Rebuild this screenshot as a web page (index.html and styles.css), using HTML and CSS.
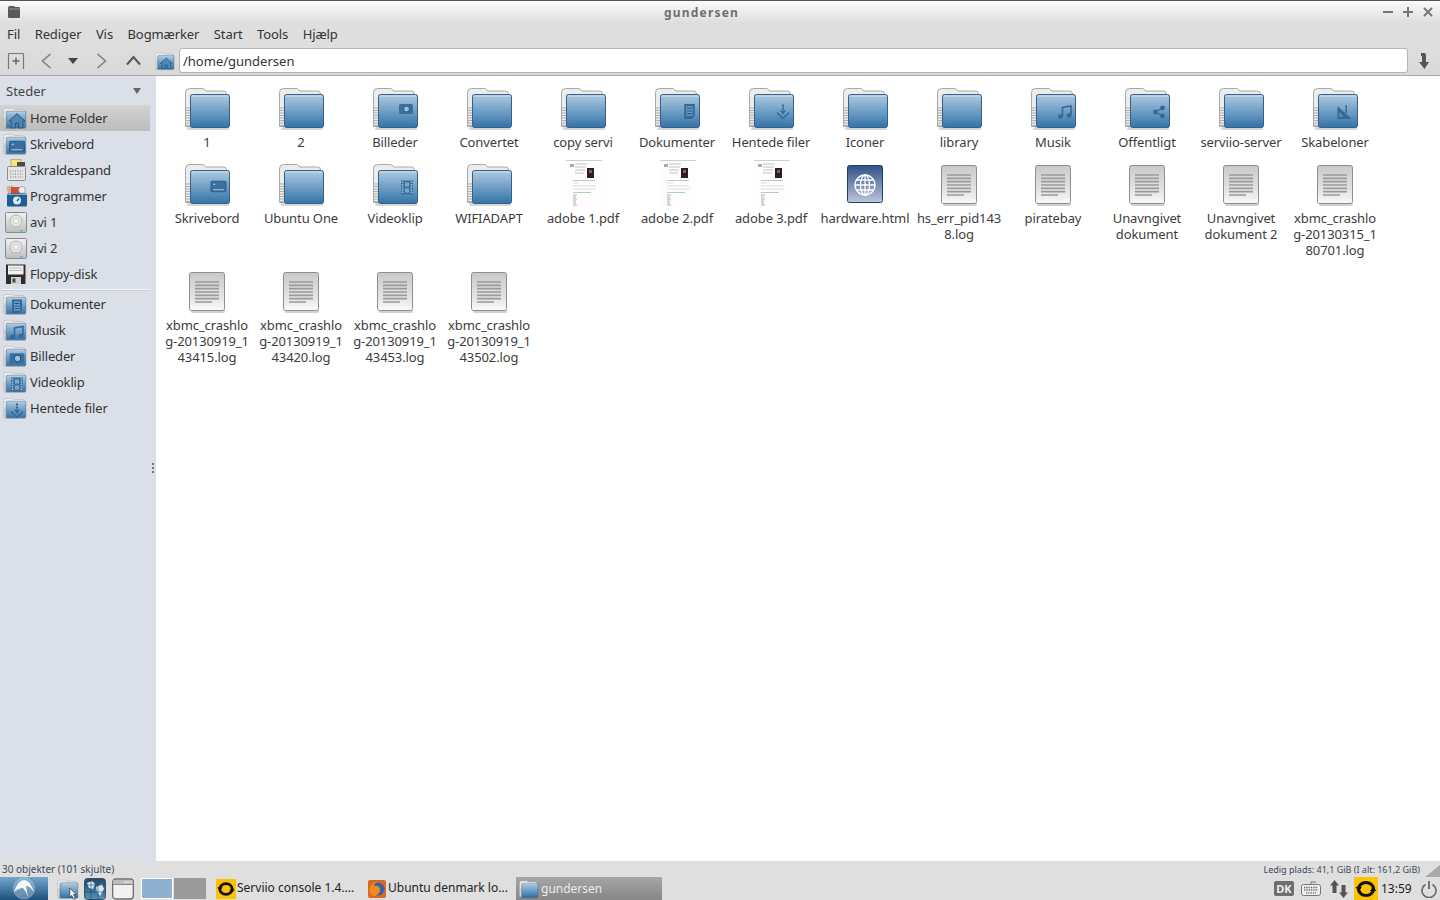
FILE: index.html
```html
<!DOCTYPE html>
<html lang="da">
<head>
  <meta charset="UTF-8" />
  <title>gundersen</title>
  <link rel="stylesheet" href="styles.css">
</head>
<body>

  <!-- ikoner -->
  <svg class="defs" width="0" height="0">
    <defs>
      <linearGradient id="gFolder" x1="0" y1="0" x2="0" y2="1">
        <stop offset="0" stop-color="#aecbe1"/>
        <stop offset="1" stop-color="#3273a9"/>
      </linearGradient>
      <linearGradient id="gDoc" x1="0" y1="0" x2="0" y2="1">
        <stop offset="0" stop-color="#c9c9c9"/>
        <stop offset="0.7" stop-color="#e6e6e6"/>
        <stop offset="1" stop-color="#fafafa"/>
      </linearGradient>
      <linearGradient id="gHtml" x1="0" y1="0" x2="0" y2="1">
        <stop offset="0" stop-color="#2f5089"/>
        <stop offset="1" stop-color="#bcc8dc"/>
      </linearGradient>
      <linearGradient id="gDrive" x1="0" y1="0" x2="0" y2="1">
        <stop offset="0" stop-color="#f2f2f2"/>
        <stop offset="1" stop-color="#bdbdbd"/>
      </linearGradient>
      <linearGradient id="gTile" x1="0" y1="0" x2="0" y2="1">
        <stop offset="0" stop-color="#1f4a6c"/>
        <stop offset="1" stop-color="#4f93bd"/>
      </linearGradient>

      <symbol id="folder" viewBox="0 0 48 48">
        <rect x="3" y="43" width="42" height="3" rx="1.5" fill="#000" opacity=".16"/>
        <path d="M1.5 42.5V8.5q0-4 4-4h13q2 0 3 2.500h18q3 0 3 3v3H8v29.500z" fill="#ececec" stroke="#a9a9a9"/>
        <path d="M2 24h4.500M2 26.500h4.500M2 29h4.500M2 31.500h4.500M2 34h4.500M2 36.500h4.500M2 39h4.500M2 41.500h4.500" stroke="#adadad"/>
        <rect x="6.500" y="10.500" width="39" height="33" rx="2" fill="url(#gFolder)" stroke="#385f87"/>
        <path d="M8 12h36" stroke="#d3e3ef" opacity=".8"/>
      </symbol>

      <symbol id="em-desktop" viewBox="0 0 16 16">
        <rect x="1" y="3" width="14" height="10" rx="1" fill="#3a709d" stroke="#2c5f8b"/>
        <path d="M3 6h2M3 11h10" stroke="#a7c6de"/>
      </symbol>
      <symbol id="em-docs" viewBox="0 0 16 16">
        <path d="M3 1h10v11l-3 3H3z" fill="#34699a"/>
        <path d="M5 3h6v9H5z" fill="#6f9fc5"/>
        <path d="M5.500 5h5M5.500 7.500h5M5.500 10h5" stroke="#24557f"/>
      </symbol>
      <symbol id="em-pictures" viewBox="0 0 16 16">
        <rect x="1" y="3" width="14" height="10" rx="1.500" fill="#3a709d"/>
        <circle cx="8.500" cy="8" r="3" fill="#9cc0db" stroke="#24557f"/>
      </symbol>
      <symbol id="em-video" viewBox="0 0 16 16">
        <rect x="2" y="1" width="12" height="14" fill="#3a709d"/>
        <path d="M3.500 2v12M12.500 2v12" stroke="#a7c6de" stroke-width="1.500" stroke-dasharray="1.500 1"/>
        <path d="M6 3h4v4H6zM6 9h4v4H6z" fill="#7ca8ca"/>
      </symbol>
      <symbol id="em-music" viewBox="0 0 16 16">
        <path d="M5.500 12V3.500L14 2v9" fill="none" stroke="#34699a" stroke-width="1.600"/>
        <ellipse cx="3.500" cy="12.500" rx="2.500" ry="2.200" fill="#34699a"/>
        <ellipse cx="12" cy="11.500" rx="2.500" ry="2.200" fill="#34699a"/>
      </symbol>
      <symbol id="em-download" viewBox="0 0 16 16">
        <path d="M7 1h2v2H7zM7 4h2v2H7zM5 7h6l-3 4z" fill="#34699a"/>
        <path d="M2 9l6 6 6-6" fill="none" stroke="#34699a" stroke-width="1.500"/>
      </symbol>
      <symbol id="em-share" viewBox="0 0 16 16">
        <path d="M12 3.500L4 8l8 4.500" fill="none" stroke="#34699a" stroke-width="1.500"/>
        <circle cx="12" cy="3.500" r="2.800" fill="#34699a"/>
        <circle cx="4" cy="8" r="2.800" fill="#34699a"/>
        <circle cx="12" cy="12.500" r="2.800" fill="#34699a"/>
      </symbol>
      <symbol id="em-templates" viewBox="0 0 16 16">
        <path d="M1 2v13h14zM3 8l4 5H3z" fill="#34699a" fill-rule="evenodd"/>
        <path d="M9 1h1.500v8H9z" fill="#34699a"/>
      </symbol>
      <symbol id="em-home" viewBox="0 0 16 16">
        <path d="M8 1.500L.5 8.500h2V15h4v-4.500h3V15h4V8.500h2z" fill="#4f86b3" stroke="#244f78" stroke-width=".8"/>
      </symbol>

      <symbol id="doc" viewBox="0 0 48 48">
        <rect x="7" y="43" width="34" height="3" rx="1.500" fill="#000" opacity=".18"/>
        <rect x="5.500" y="5.500" width="35" height="38" rx="2" fill="url(#gDoc)" stroke="#8e8e8e"/>
        <path d="M11 15h24M11 18.400h24M11 21.700h24M11 25h24M11 28.400h24M11 31.700h24M11 35h17" stroke="#9a9a9a" stroke-width="1.700"/>
      </symbol>

      <symbol id="html" viewBox="0 0 48 48">
        <rect x="5.500" y="5.500" width="35" height="37" rx="2" fill="url(#gHtml)" stroke="#1d4074"/>
        <g fill="none" stroke="#fff" stroke-width="1.300">
          <circle cx="23" cy="25" r="10"/>
          <ellipse cx="23" cy="25" rx="4.500" ry="10"/>
          <path d="M23 15v20M13 25h20M14.500 20h17M14.500 30h17"/>
        </g>
      </symbol>

      <symbol id="pdf" viewBox="0 0 48 48">
        <rect x="6" y="0" width="36" height="48" fill="#fdfdfd"/>
        <path d="M6 .5h36" stroke="#c4c4c4" stroke-width=".8"/>
        <rect x="10" y="4" width="4" height="3" fill="#c8a090"/>
        <path d="M15 4h12M15 7h11M15 10h10M15 13h9" stroke="#bbb" stroke-width=".9"/>
        <rect x="27" y="8" width="7" height="10" fill="#2a2024"/>
        <rect x="29" y="10" width="3" height="3" fill="#8a5a60"/>
        <path d="M13 20.500h22" stroke="#a5cfa5" stroke-width=".9"/>
        <path d="M13 23h6M13 26h23M13 29h23" stroke="#d4d4d4" stroke-width=".8"/>
        <path d="M13 32.500h18" stroke="#a5cfa5" stroke-width=".9"/>
        <path d="M13 35h4M13 37h3M13 39h4M13 41h3M13 43h3M13 45h4" stroke="#a8a8a8" stroke-width=".9"/>
      </symbol>

      <symbol id="drive" viewBox="0 0 24 24">
        <rect x="2.500" y="2.500" width="21" height="20" rx="1" fill="url(#gDrive)" stroke="#8a8a8a"/>
        <circle cx="13" cy="11" r="6" fill="#e6e6e6" stroke="#b4b4b4"/>
        <circle cx="13" cy="11" r="3" fill="#efefef" stroke="#cfcfcf"/>
        <rect x="17" y="20" width="3" height="1.500" fill="#36c8d8"/>
      </symbol>
      <symbol id="floppy" viewBox="0 0 24 24">
        <path d="M3 2.500h19.500V22H3z" fill="#2d2d2d"/>
        <rect x="5" y="3.500" width="15.500" height="9" fill="#f2f2f2"/>
        <path d="M6 6h13M6 8.500h13" stroke="#bbb"/>
        <rect x="8" y="15" width="10" height="7" fill="#d0d0d0"/>
        <rect x="9.500" y="16.500" width="3" height="4" fill="#444"/>
      </symbol>
      <symbol id="trash" viewBox="0 0 24 24">
        <rect x="8" y="1.500" width="10" height="8" fill="#f6e27a" stroke="#b3a14a" stroke-width=".7"/>
        <rect x="14" y="4" width="8" height="6" fill="#4a4a4a"/>
        <rect x="4.500" y="8.500" width="18" height="14" rx="1" fill="#e4e4e4" stroke="#8c8c8c"/>
        <path d="M7 13h13M7 16h13M7 19h13" stroke="#777" stroke-dasharray="1 1.500"/>
      </symbol>
      <symbol id="apps" viewBox="0 0 24 24">
        <rect x="4" y="2" width="6" height="7" fill="#c9b28b" transform="rotate(-15 7 5)"/>
        <rect x="8" y="3" width="10" height="7" fill="#d24b3c"/>
        <circle cx="19" cy="6" r="3.500" fill="#eee" stroke="#888" stroke-width=".7"/>
        <rect x="4" y="9.500" width="20" height="13" rx="1" fill="#1e5e94"/>
        <path d="M4 10.500h20" stroke="#7fb0d4"/>
        <circle cx="14" cy="16.500" r="4" fill="#dfe9f1"/>
        <path d="M14 17l2-2.500" stroke="#1e5e94" stroke-width="1.300"/>
      </symbol>

      <symbol id="serviio" viewBox="0 0 24 24">
        <rect width="24" height="24" fill="#fdc200"/>
        <ellipse cx="12" cy="12" rx="7.500" ry="6.500" fill="none" stroke="#111" stroke-width="3.200"/>
        <path d="M1.500 10h6.500l-3.200 4.500zM22.500 14h-6.500l3.200-4.500z" fill="#111"/>
      </symbol>
    </defs>
  </svg>

  <header class="titellinje">
    <svg class="app-ikon" width="14" height="14" viewBox="0 0 14 14"><path d="M1 3q0-2 2-2h4l1 1h4q1 0 1 1v9q0 1-1 1H2q-1 0-1-1z" fill="#5a5a5a"/><path d="M2 4h11" stroke="#9a9a9a"/></svg>
    <div class="titel">gundersen</div>
    <div class="vindue-knapper">
      <svg width="12" height="12" viewBox="0 0 12 12"><path d="M1 6h10" stroke="#777" stroke-width="2"/></svg>
      <svg width="12" height="12" viewBox="0 0 12 12"><path d="M1 6h10M6 1v10" stroke="#777" stroke-width="2"/></svg>
      <svg width="12" height="12" viewBox="0 0 12 12"><path d="M2 2l8 8M10 2l-8 8" stroke="#777" stroke-width="2"/></svg>
    </div>
  </header>

  <nav class="menu">
    <span>Fil</span>
    <span>Rediger</span>
    <span>Vis</span>
    <span>Bogmærker</span>
    <span>Start</span>
    <span>Tools</span>
    <span>Hjælp</span>
  </nav>

  <div class="vaerktoj">
    <svg class="v-ny" width="18" height="18" viewBox="0 0 18 18"><path d="M1.500 17V2.500q0-1 1-1h13q1 0 1 1V17" fill="none" stroke="#777" stroke-width="1.200"/><path d="M9 5.500v7M5.500 9h7" stroke="#666" stroke-width="1.500"/></svg>
    <svg class="v-tilbage" width="12" height="16" viewBox="0 0 12 16"><path d="M10.500 1L2.500 8l8 7" fill="none" stroke="#808080" stroke-width="1.600"/></svg>
    <svg class="v-pil" width="10" height="6" viewBox="0 0 10 6"><path d="M0 0h10L5 6z" fill="#444"/></svg>
    <svg class="v-frem" width="12" height="16" viewBox="0 0 12 16"><path d="M1.500 1l8 7-8 7" fill="none" stroke="#808080" stroke-width="1.600"/></svg>
    <svg class="v-op" width="15" height="11" viewBox="0 0 15 11"><path d="M1 9.500L7.500 2 14 9.500" fill="none" stroke="#555" stroke-width="2"/></svg>
    <svg class="v-hjem" width="20" height="20" viewBox="0 0 24 24"><use href="#folder" width="24" height="24"/><use href="#em-home" x="5" y="7" width="17" height="15"/></svg>
    <div class="adresse">/home/gundersen</div>
    <svg class="v-mic" width="14" height="18" viewBox="0 0 14 18"><path d="M4 1h3q2 0 2 2v7h3l-4.500 7L2 10h3V4H4z" fill="#555"/></svg>
  </div>

  <div class="indhold">
    <aside class="sidepanel">
      <div class="sidepanel-liste">
        <div class="steder"><span>Steder</span><i class="steder-pil"></i></div>
        <div class="sted valgt"><svg viewBox="0 0 24 24"><use href="#folder" width="24" height="24"/><use href="#em-home" x="5" y="6" width="18" height="17"/></svg>Home Folder</div>
        <div class="sted"><svg viewBox="0 0 24 24"><use href="#folder" width="24" height="24"/><use href="#em-desktop" x="5" y="6" width="18" height="17"/></svg>Skrivebord</div>
        <div class="sted"><svg viewBox="0 0 24 24"><use href="#trash"/></svg>Skraldespand</div>
        <div class="sted"><svg viewBox="0 0 24 24"><use href="#apps"/></svg>Programmer</div>
        <div class="sted"><svg viewBox="0 0 24 24"><use href="#drive"/></svg>avi 1</div>
        <div class="sted"><svg viewBox="0 0 24 24"><use href="#drive"/></svg>avi 2</div>
        <div class="sted"><svg viewBox="0 0 24 24"><use href="#floppy"/></svg>Floppy-disk</div>
        <div class="skille"></div>
        <div class="sted"><svg viewBox="0 0 24 24"><use href="#folder" width="24" height="24"/><use href="#em-docs" x="6" y="6" width="16" height="17"/></svg>Dokumenter</div>
        <div class="sted"><svg viewBox="0 0 24 24"><use href="#folder" width="24" height="24"/><use href="#em-music" x="6" y="6" width="16" height="17"/></svg>Musik</div>
        <div class="sted"><svg viewBox="0 0 24 24"><use href="#folder" width="24" height="24"/><use href="#em-pictures" x="5" y="6" width="18" height="17"/></svg>Billeder</div>
        <div class="sted"><svg viewBox="0 0 24 24"><use href="#folder" width="24" height="24"/><use href="#em-video" x="6" y="6" width="16" height="17"/></svg>Videoklip</div>
        <div class="sted"><svg viewBox="0 0 24 24"><use href="#folder" width="24" height="24"/><use href="#em-download" x="6" y="6" width="16" height="17"/></svg>Hentede filer</div>
      </div>
      <div class="greb"><i></i><i></i><i></i></div>
    </aside>

    <main class="filer">
      <div class="fil"><svg viewBox="0 0 48 48"><use href="#folder"/></svg><div class="navn">1</div></div>
      <div class="fil"><svg viewBox="0 0 48 48"><use href="#folder"/></svg><div class="navn">2</div></div>
      <div class="fil"><svg viewBox="0 0 48 48"><use href="#folder"/><use href="#em-pictures" x="26" y="17" width="16" height="16"/></svg><div class="navn">Billeder</div></div>
      <div class="fil"><svg viewBox="0 0 48 48"><use href="#folder"/></svg><div class="navn">Convertet</div></div>
      <div class="fil"><svg viewBox="0 0 48 48"><use href="#folder"/></svg><div class="navn">copy servi</div></div>
      <div class="fil"><svg viewBox="0 0 48 48"><use href="#folder"/><use href="#em-docs" x="27" y="18" width="17" height="19"/></svg><div class="navn">Dokumenter</div></div>
      <div class="fil"><svg viewBox="0 0 48 48"><use href="#folder"/><use href="#em-download" x="27" y="19" width="16" height="17"/></svg><div class="navn">Hentede filer</div></div>
      <div class="fil"><svg viewBox="0 0 48 48"><use href="#folder"/></svg><div class="navn">Iconer</div></div>
      <div class="fil"><svg viewBox="0 0 48 48"><use href="#folder"/></svg><div class="navn">library</div></div>
      <div class="fil"><svg viewBox="0 0 48 48"><use href="#folder"/><use href="#em-music" x="27" y="20" width="16" height="16"/></svg><div class="navn">Musik</div></div>
      <div class="fil"><svg viewBox="0 0 48 48"><use href="#folder"/><use href="#em-share" x="28" y="20" width="14" height="16"/></svg><div class="navn">Offentligt</div></div>
      <div class="fil"><svg viewBox="0 0 48 48"><use href="#folder"/></svg><div class="navn">serviio-server</div></div>
      <div class="fil"><svg viewBox="0 0 48 48"><use href="#folder"/><use href="#em-templates" x="24" y="20" width="17" height="16"/></svg><div class="navn">Skabeloner</div></div>

      <div class="fil"><svg viewBox="0 0 48 48"><use href="#folder"/><use href="#em-desktop" x="26" y="18" width="17" height="17"/></svg><div class="navn">Skrivebord</div></div>
      <div class="fil"><svg viewBox="0 0 48 48"><use href="#folder"/></svg><div class="navn">Ubuntu One</div></div>
      <div class="fil"><svg viewBox="0 0 48 48"><use href="#folder"/><use href="#em-video" x="27" y="19" width="16" height="17"/></svg><div class="navn">Videoklip</div></div>
      <div class="fil"><svg viewBox="0 0 48 48"><use href="#folder"/></svg><div class="navn">WIFIADAPT</div></div>
      <div class="fil"><svg viewBox="0 0 48 48"><use href="#pdf"/></svg><div class="navn">adobe 1.pdf</div></div>
      <div class="fil"><svg viewBox="0 0 48 48"><use href="#pdf"/></svg><div class="navn">adobe 2.pdf</div></div>
      <div class="fil"><svg viewBox="0 0 48 48"><use href="#pdf"/></svg><div class="navn">adobe 3.pdf</div></div>
      <div class="fil"><svg viewBox="0 0 48 48"><use href="#html"/></svg><div class="navn">hardware.html</div></div>
      <div class="fil"><svg viewBox="0 0 48 48"><use href="#doc"/></svg><div class="navn">hs_err_pid143<br>8.log</div></div>
      <div class="fil"><svg viewBox="0 0 48 48"><use href="#doc"/></svg><div class="navn">piratebay</div></div>
      <div class="fil"><svg viewBox="0 0 48 48"><use href="#doc"/></svg><div class="navn">Unavngivet<br>dokument</div></div>
      <div class="fil"><svg viewBox="0 0 48 48"><use href="#doc"/></svg><div class="navn">Unavngivet<br>dokument 2</div></div>
      <div class="fil"><svg viewBox="0 0 48 48"><use href="#doc"/></svg><div class="navn">xbmc_crashlo<br>g-20130315_1<br>80701.log</div></div>

      <div class="fil"><svg viewBox="0 0 48 48"><use href="#doc"/></svg><div class="navn">xbmc_crashlo<br>g-20130919_1<br>43415.log</div></div>
      <div class="fil"><svg viewBox="0 0 48 48"><use href="#doc"/></svg><div class="navn">xbmc_crashlo<br>g-20130919_1<br>43420.log</div></div>
      <div class="fil"><svg viewBox="0 0 48 48"><use href="#doc"/></svg><div class="navn">xbmc_crashlo<br>g-20130919_1<br>43453.log</div></div>
      <div class="fil"><svg viewBox="0 0 48 48"><use href="#doc"/></svg><div class="navn">xbmc_crashlo<br>g-20130919_1<br>43502.log</div></div>
    </main>
  </div>

  <div class="statuslinje">
    <span>30 objekter (101 skjulte)</span>
    <span class="ledig">Ledig plads: 41,1 GiB (I alt: 161,2 GiB)</span>
    <svg class="hjoerne" width="15" height="12" viewBox="0 0 15 12"><path d="M15 0v12H0z" fill="#a9a9a9"/></svg>
  </div>

  <footer class="panel">
    <div class="start">
      <svg width="26" height="23" viewBox="0 0 26 23"><circle cx="13" cy="11.500" r="10.500" fill="#a9c5da" opacity=".45" stroke="#dfe9f0"/><path d="M3 15Q7 3 13 3t10 12q-5-7-8-6l2 11q-2-6-5-9-4 0-9 4z" fill="#f4f8fb"/></svg>
    </div>
    <svg class="gen-mappe" width="22" height="22" viewBox="0 0 24 24"><use href="#folder" width="24" height="24"/><path d="M14 11l7 7h-3l2 4-2 1-2-4-2 2z" fill="#fff" stroke="#333" stroke-width=".8"/></svg>
    <svg class="gen-web" width="22" height="22" viewBox="0 0 22 22"><rect x=".5" y=".5" width="21" height="21" rx="3" fill="url(#gTile)" stroke="#3d4c5a"/><path d="M3 5l5-2 3 3-2 5-4-1zM12 9l6-3 2 5-4 7-3-4z" fill="#dbe8f0"/><path d="M7 .5v21M14 .5v21M.5 7h21M.5 14h21" stroke="#1f4a6c" stroke-width=".6"/></svg>
    <svg class="gen-vindue" width="22" height="22" viewBox="0 0 22 22"><rect x=".7" y="1" width="20.600" height="20" rx="3" fill="#f1f1f1" stroke="#6c6c6c" stroke-width="1.300"/><path d="M1 6.500h20" stroke="#8a8a8a"/><rect x="1.500" y="2" width="19" height="4" fill="#bdbdbd"/><path d="M12 4h2M15 4h2M18 4h1.500" stroke="#fff"/></svg>
    <div class="pager">
      <div class="flade aktiv"></div>
      <div class="flade"></div>
    </div>
    <div class="opgave">
      <svg width="20" height="20" viewBox="0 0 24 24"><use href="#serviio"/></svg>
      <span>Serviio console 1.4....</span>
    </div>
    <div class="opgave opgave-ff">
      <svg width="18" height="18" viewBox="0 0 18 18"><rect width="18" height="18" rx="2" fill="#d9691e"/><circle cx="10" cy="9" r="6.500" fill="#2f64a8"/><path d="M1 11q1-9 9-9-4 1-4 4 5-1 6 3t-5 7Q3 16 1 11z" fill="#ee8a1f"/></svg>
      <span>Ubuntu denmark lo...</span>
    </div>
    <div class="opgave-aktiv">
      <svg width="20" height="20" viewBox="0 0 24 24"><use href="#folder" width="24" height="24"/></svg>
      <span>gundersen</span>
    </div>
    <div class="bakke">
      <span class="dk">DK</span>
      <svg class="b-tast" width="20" height="15" viewBox="0 0 20 15"><path d="M10 3V1h5" fill="none" stroke="#777"/><rect x=".5" y="3.500" width="19" height="11" rx="2" fill="#eee" stroke="#777"/><path d="M3 6.500h14M3 9h14M5 11.800h10" stroke="#666" stroke-width="1.300" stroke-dasharray="1.300 1"/></svg>
      <svg class="b-net" width="20" height="20" viewBox="0 0 20 20"><path d="M5.500 1L10 6.500H7.500V14h-4V6.500H1zM14.500 19L10 13.500h2.500V6h4v7.500H19z" fill="#555"/></svg>
      <svg class="b-serviio" width="24" height="24" viewBox="0 0 24 24"><use href="#serviio"/></svg>
      <span class="ur">13:59</span>
      <svg class="b-sluk" width="16" height="18" viewBox="0 0 16 18"><path d="M4.500 4.500a7 7 0 1 0 7 0" fill="none" stroke="#666" stroke-width="1.600"/><path d="M8 1v8" stroke="#666" stroke-width="1.800"/></svg>
    </div>
  </footer>

</body>
</html>
```

FILE: styles.css
```css
* {
  box-sizing: border-box;
}
html, body {
  height: 100%;
}
body {
  margin: 0;
  width: 1440px;
  height: 900px;
  overflow: hidden;
  display: flex;
  flex-direction: column;
  font-family: "Noto Sans", sans-serif;
  font-size: 13px;
  color: #3c3c3c;
  background: #dfdfdf;
}
svg {
  display: block;
  flex: none;
}
.defs {
  position: absolute;
}

/* titellinje */
.titellinje {
  height: 23px;
  display: flex;
  align-items: center;
  padding: 0 6px 0 7px;
  border-top: 1px solid #555;
  background: linear-gradient(#fbfbfb, #dedede);
}
.titel {
  flex: 1;
  text-align: center;
  font-size: 12px;
  font-weight: bold;
  letter-spacing: 1.2px;
  color: #6e6e6e;
}
.vindue-knapper {
  display: flex;
  gap: 8px;
}

/* menu */
.menu {
  height: 23px;
  display: flex;
  align-items: center;
  gap: 14.500px;
  padding: 0 0 2px 7px;
  background: #dedede;
  color: #333;
  letter-spacing: -0.1px;
}

/* vaerktoj */
.vaerktoj {
  height: 30px;
  display: flex;
  align-items: center;
  background: linear-gradient(#dedede, #d9d9d9);
  border-bottom: 1px solid #a9a9a9;
}
.v-ny { margin-left: 7px; }
.v-tilbage { margin-left: 15px; }
.v-pil { margin-left: 16px; }
.v-frem { margin-left: 18px; }
.v-op { margin-left: 18px; }
.v-hjem { margin-left: 14px; }
.adresse {
  width: 1229px;
  height: 25px;
  margin-left: 4px;
  padding-left: 3px;
  line-height: 25px;
  background: #fff;
  border: 1px solid #b5b5b5;
  border-radius: 3px;
  color: #333;
}
.v-mic { margin-left: 9px; }

/* indhold */
.indhold {
  flex: 1;
  display: flex;
  min-height: 0;
}
.sidepanel {
  width: 156px;
  background: #dbe0e8;
  display: flex;
}
.sidepanel-liste {
  width: 150px;
}
.steder {
  height: 29px;
  display: flex;
  align-items: center;
  justify-content: space-between;
  padding: 0 9px 0 6px;
  color: #444;
}
.steder-pil {
  width: 0;
  height: 0;
  border-left: 4px solid transparent;
  border-right: 4px solid transparent;
  border-top: 6px solid #666;
}
.sted {
  height: 26px;
  display: flex;
  align-items: center;
  gap: 3px;
  padding-left: 3px;
  color: #333;
  letter-spacing: -0.15px;
}
.sted svg {
  width: 24px;
  height: 24px;
}
.sted.valgt {
  background: linear-gradient(#d3d3d3, #bcbcbc);
}
.skille {
  height: 2px;
  margin: 2px 0 0 1px;
  border-top: 1px solid #f2f4f6;
  border-bottom: 1px solid #c8ced6;
}
.greb {
  flex: 1;
  display: flex;
  flex-direction: column;
  align-items: center;
  justify-content: flex-start;
  gap: 2px;
  padding-top: 387px;
}
.greb i {
  width: 2px;
  height: 2px;
  background: #777;
}

/* filer */
.filer {
  flex: 1;
  background: #fff;
  display: grid;
  grid-template-columns: repeat(13, 94px);
  grid-template-rows: 76px 107px;
  align-content: start;
  padding: 8px 0 0 5px;
}
.fil {
  display: flex;
  flex-direction: column;
  align-items: center;
}
.fil svg {
  width: 48px;
  height: 48px;
}
.navn {
  margin: 2px 2px 0 0;
  line-height: 16px;
  text-align: center;
  white-space: nowrap;
  color: #3c3c3c;
  letter-spacing: -0.1px;
}

/* statuslinje */
.statuslinje {
  height: 16px;
  display: flex;
  align-items: center;
  justify-content: space-between;
  padding: 0 20px 0 2px;
  position: relative;
  font-size: 10px;
  color: #3d4a5c;
}
.ledig {
  font-size: 9px;
}
.hjoerne {
  position: absolute;
  right: 0;
  bottom: 0;
}

/* panel */
.panel {
  height: 23px;
  display: flex;
  align-items: center;
  background: #dfdfdf;
  color: #222;
  font-size: 12px;
}
.start {
  width: 48px;
  height: 23px;
  display: flex;
  justify-content: center;
  background: linear-gradient(#74a7cb, #1c527e);
}
.gen-mappe { margin-left: 9px; }
.gen-web { margin-left: 5px; }
.gen-vindue { margin-left: 6px; }
.pager {
  display: flex;
  gap: 1px;
  margin-left: 7px;
}
.flade {
  width: 32px;
  height: 21px;
  background: #9b9b9b;
}
.flade.aktiv {
  background: #8fb0cf;
  border: 1px solid #fff;
}
.opgave {
  display: flex;
  align-items: center;
  gap: 1px;
  margin-left: 10px;
  width: 141px;
  white-space: nowrap;
}
.opgave span {
  margin-bottom: 3px;
}
.opgave-ff {
  width: 140px;
  margin-left: 11px;
  gap: 2px;
}
.opgave-aktiv {
  width: 146px;
  height: 23px;
  display: flex;
  align-items: center;
  gap: 2px;
  padding-left: 3px;
  margin-left: 8px;
  background: linear-gradient(#a6a6a6, #868686);
  color: #ececec;
}
.opgave-aktiv span {
  margin-bottom: 1px;
}
.bakke {
  margin-left: auto;
  display: flex;
  align-items: center;
}
.dk {
  width: 20px;
  height: 15px;
  border-radius: 2px;
  background: #6e6e6e;
  color: #eee;
  font-size: 11px;
  font-weight: bold;
  line-height: 15px;
  text-align: center;
}
.b-tast { margin-left: 7px; }
.b-net { margin-left: 8px; }
.b-serviio { margin-left: 5px; }
.ur {
  margin-left: 3px;
  width: 34px;
  margin-bottom: 1px;
  color: #1c1c1c;
}
.b-sluk { margin: 0 3px 0 6px; }
```
